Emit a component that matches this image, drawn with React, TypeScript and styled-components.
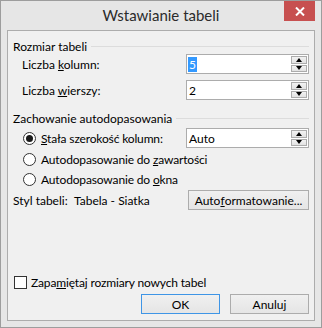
import React from "react";
import styled, { createGlobalStyle } from "styled-components";

const Global = createGlobalStyle`
  html, body { margin: 0; padding: 0; background: #ffffff; }
  * { box-sizing: border-box; }
`;

const FONT = `Lato, "Noto Sans", "Liberation Sans", sans-serif`;

const Window = styled.div`
  width: 322px;
  height: 328px;
  border: 1px solid #9d9d9d;
  background: #e6e6e6;
  display: flex;
  flex-direction: column;
  font-family: ${FONT};
  font-size: 12px;
  color: #000;
`;

const TitleBar = styled.div`
  height: 29px;
  display: grid;
  grid-template-columns: 1fr auto 1fr;
  align-items: start;
`;

const Title = styled.div`
  grid-column: 2;
  font-size: 15px;
  line-height: 29px;
  color: #2b2b2b;
`;

const CloseButton = styled.div`
  grid-column: 3;
  justify-self: end;
  margin-right: 6px;
  width: 31px;
  height: 20px;
  background: #c75050;
  display: flex;
  align-items: center;
  justify-content: center;
`;

const Client = styled.div`
  flex: 1;
  margin: 0 6px 6px 6px;
  border: 1px solid #acacac;
  background: #f0f0f0;
  padding: 7px 5px 6px 5px;
  display: flex;
  flex-direction: column;
`;

const GroupHeader = styled.div<{ $top: number }>`
  display: flex;
  align-items: center;
  height: 16px;
  gap: 4px;
  margin-top: ${(p) => p.$top}px;
  &::after {
    content: "";
    flex: 1;
    height: 1px;
    background: #dcdcdc;
  }
`;

const FieldRow = styled.div<{ $top: number }>`
  display: flex;
  align-items: center;
  margin-top: ${(p) => p.$top}px;
  height: 20px;
  padding-left: 9px;
`;

const FieldLabel = styled.div`
  flex: 1;
`;

const SpinBox = styled.div`
  width: 123px;
  height: 20px;
  border: 1px solid #acacac;
  background: #fff;
  display: flex;
`;

const SpinValue = styled.div`
  flex: 1;
  display: flex;
  align-items: center;
  padding-left: 1px;
`;

const Selected = styled.span`
  background: #3399ff;
  color: #fff;
  line-height: 15px;
  padding: 0 1px;
`;

const Plain = styled.span`
  padding: 0 1px;
  line-height: 15px;
`;

const SpinButtons = styled.div`
  width: 16px;
  display: flex;
  flex-direction: column;
  gap: 1px;
  padding: 1px 0 1px 0;
  margin-right: 1px;
`;

const SpinButton = styled.div`
  flex: 1;
  background: linear-gradient(#f2f2f2, #e2e2e2);
  border: 1px solid #acacac;
  display: flex;
  align-items: center;
  justify-content: center;
`;

const Arrow = styled.div<{ $up?: boolean }>`
  width: 0;
  height: 0;
  border-left: 3.5px solid transparent;
  border-right: 3.5px solid transparent;
  ${(p) =>
    p.$up
      ? "border-bottom: 4px solid #000;"
      : "border-top: 4px solid #000;"}
`;

const RadioRow = styled.div<{ $top: number }>`
  display: flex;
  align-items: center;
  height: 20px;
  margin-top: ${(p) => p.$top}px;
  padding-left: 10px;
`;

const RadioCircle = styled.div<{ $checked?: boolean }>`
  width: 13px;
  height: 13px;
  border-radius: 50%;
  border: 1px solid #333;
  background: #fff;
  display: flex;
  align-items: center;
  justify-content: center;
  margin-right: 5px;
  &::after {
    content: "";
    display: ${(p) => (p.$checked ? "block" : "none")};
    width: 7px;
    height: 7px;
    border-radius: 50%;
    background: #1a1a1a;
  }
`;

const RadioLabel = styled.div`
  flex: 1;
  letter-spacing: -0.15px;
`;

const StyleRow = styled.div`
  display: flex;
  align-items: center;
  height: 20px;
  margin-top: 1px;
`;

const StyleLabel = styled.div`
  width: 61px;
`;

const StyleValue = styled.div`
  flex: 1;
`;

const Button = styled.div<{ $width: number; $default?: boolean }>`
  width: ${(p) => p.$width}px;
  height: 20px;
  border: 1px solid ${(p) => (p.$default ? "#3e95e6" : "#acacac")};
  background: linear-gradient(#f0f0f0, #e5e5e5);
  display: flex;
  align-items: center;
  justify-content: center;
`;

const Spacer = styled.div`
  flex: 1;
`;

const CheckRow = styled.div`
  display: flex;
  align-items: center;
  height: 16px;
  padding-left: 1px;
  letter-spacing: -0.15px;
`;

const CheckBox = styled.div`
  width: 13px;
  height: 13px;
  border: 1px solid #333;
  background: #fff;
  margin-right: 4px;
`;

const ButtonRow = styled.div`
  display: flex;
  justify-content: flex-end;
  gap: 10px;
  margin-top: 4px;
`;

function Spin({ value, selected }: { value: string; selected?: boolean }) {
  return (
    <SpinBox>
      <SpinValue>{selected ? <Selected>{value}</Selected> : <Plain>{value}</Plain>}</SpinValue>
      <SpinButtons>
        <SpinButton>
          <Arrow $up />
        </SpinButton>
        <SpinButton>
          <Arrow />
        </SpinButton>
      </SpinButtons>
    </SpinBox>
  );
}

export default function App() {
  return (
    <>
      <Global />
      <Window>
        <TitleBar>
          <Title>Wstawianie tabeli</Title>
          <CloseButton>
            <svg width="10" height="9" viewBox="0 0 10 9">
              <path d="M1 0.5 L9 8.5 M9 0.5 L1 8.5" stroke="#fff" strokeWidth="2" />
            </svg>
          </CloseButton>
        </TitleBar>
        <Client>
          <GroupHeader $top={0}>Rozmiar tabeli</GroupHeader>
          <FieldRow $top={0}>
            <FieldLabel>
              Liczba <u>k</u>olumn:
            </FieldLabel>
            <Spin value="5" selected />
          </FieldRow>
          <FieldRow $top={6}>
            <FieldLabel>
              Liczba <u>w</u>ierszy:
            </FieldLabel>
            <Spin value="2" />
          </FieldRow>
          <GroupHeader $top={10}>Zachowanie autodopasowania</GroupHeader>
          <RadioRow $top={2}>
            <RadioCircle $checked />
            <RadioLabel>
              <u>S</u>tała szerokość kolumn:
            </RadioLabel>
            <Spin value="Auto" />
          </RadioRow>
          <RadioRow $top={1}>
            <RadioCircle />
            <RadioLabel>
              Autodopasowanie do <u>z</u>awartości
            </RadioLabel>
          </RadioRow>
          <RadioRow $top={0}>
            <RadioCircle />
            <RadioLabel>
              Autodopasowanie do <u>o</u>kna
            </RadioLabel>
          </RadioRow>
          <StyleRow>
            <StyleLabel>Styl tabeli:</StyleLabel>
            <StyleValue>Tabela - Siatka</StyleValue>
            <Button $width={121}>
              Auto<u>f</u>ormatowanie...
            </Button>
          </StyleRow>
          <Spacer />
          <CheckRow>
            <CheckBox />
            Zapa<u>m</u>iętaj rozmiary nowych tabel
          </CheckRow>
          <ButtonRow>
            <Button $width={79} $default>
              OK
            </Button>
            <Button $width={79}>Anuluj</Button>
          </ButtonRow>
        </Client>
      </Window>
    </>
  );
}
